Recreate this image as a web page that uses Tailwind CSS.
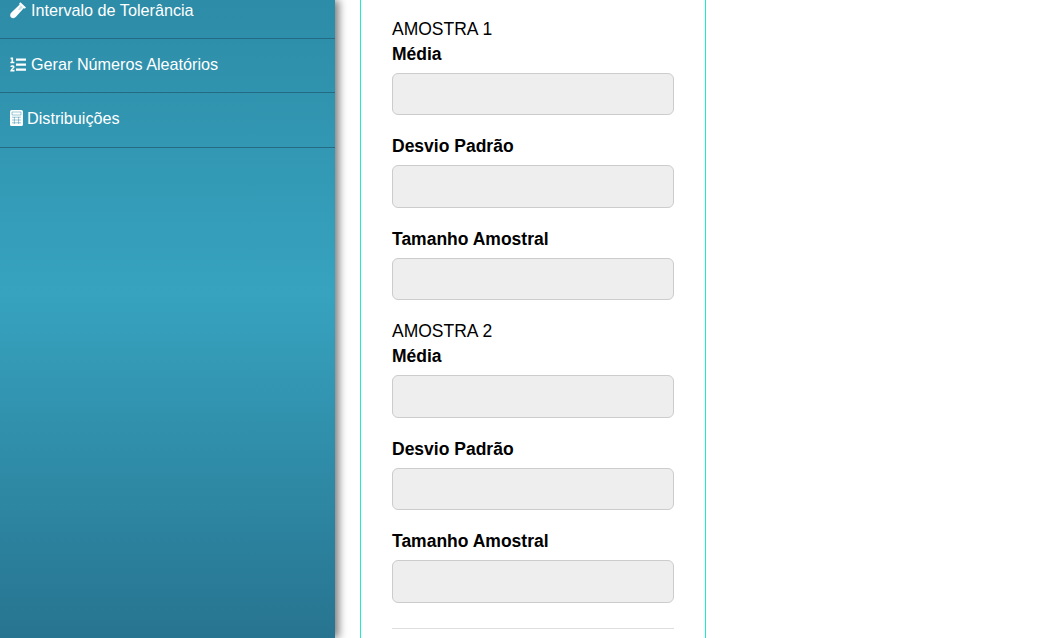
<!DOCTYPE html>
<html lang="pt">
<head>
<meta charset="utf-8">
<script src="https://cdn.jsdelivr.net/npm/@tailwindcss/browser@4"></script>
</head>
<body class="h-[638px] w-[1044px] overflow-hidden bg-white font-['Liberation_Sans',Arial,sans-serif] text-black">
<div class="flex h-[638px]">
  <aside class="h-[638px] w-[335px] shrink-0 bg-[linear-gradient(to_bottom,#2d8ca7_0%,#37a3bf_46%,#277490_100%)] text-white shadow-[4px_0_8px_rgba(0,0,0,0.5)]">
    <ul class="-mt-[17px] text-[16.2px] leading-[23px]">
      <li class="flex h-[56px] items-center gap-[5px] border-b border-[#256a85] pl-[10px]">
        <svg class="h-[17px] w-[16px] shrink-0" viewBox="0 0 16 17" fill="#fff"><path d="M10.4 0.2 16 5.4 14.7 6.8 13.9 6.1 6 14.8C4.6 16.4 2.6 16.7 1.1 15.4-0.3 14-0.1 12 1.4 10.5L9.7 2.4 9.1 1.7Z"/><path d="M10.7 3.2 12.8 5.2 10.2 8H7.9Z" fill="#2d8ca7" opacity="0.25"/></svg>
        <span>Intervalo de Tolerância</span>
      </li>
      <li class="flex h-[54px] items-center gap-[5px] border-b border-[#256a85] pb-[2px] pl-[10px]">
        <svg class="h-[16px] w-[16px] shrink-0" viewBox="0 0 16 16" fill="#fff"><path d="M0.6 0.6H3.1V4.7H4.4V6.3H0.4V4.7H1.5V2.2H0.6ZM0.3 9.2C1 7.9 4.5 7.5 4.5 9.9 4.5 11.4 2.7 11.8 2.3 12.7H4.5V14.4H0.2C0.2 11.9 2.7 11.2 2.7 10.2 2.7 9.4 1.4 9.6 1 10.2ZM6 1.6H16V3.8H6ZM6 6.6H16V8.8H6ZM6 11.6H16V13.8H6Z"/></svg>
        <span>Gerar Números Aleatórios</span>
      </li>
      <li class="flex h-[55px] items-center gap-[4px] border-b border-[#256a85] pb-[4px] pl-[10px]">
        <svg class="h-[16px] w-[13px] shrink-0" viewBox="0 0 13 16"><rect width="13" height="16" rx="1.6" fill="#fff"/><path d="M2 2H11V5H2ZM2 7.2H11M2 10H11M2 12.8H11M4.4 7V14M8.6 7V14" fill="none" stroke="#2d8ca7" stroke-width="0.8" opacity="0.6"/></svg>
        <span>Distribuições</span>
      </li>
    </ul>
  </aside>
  <main class="ml-[25px] h-[638px] w-[346px] shrink-0 border-x border-[#1aecd0] pl-[31px] pr-[31px] text-[17.5px] leading-[25px]">
    <form class="pt-[16.75px]">
      <p>AMOSTRA 1</p>
      <div class="mb-[19px]">
        <label class="mb-[6px] block font-bold">Média</label>
        <input class="block h-[42.5px] w-[282px] rounded-[6px] border border-[#cccccc] bg-[#eeeeee]" disabled>
      </div>
      <div class="mb-[19px]">
        <label class="mb-[6px] block font-bold">Desvio Padrão</label>
        <input class="block h-[42.5px] w-[282px] rounded-[6px] border border-[#cccccc] bg-[#eeeeee]" disabled>
      </div>
      <div class="mb-[19px]">
        <label class="mb-[6px] block font-bold">Tamanho Amostral</label>
        <input class="block h-[42.5px] w-[282px] rounded-[6px] border border-[#cccccc] bg-[#eeeeee]" disabled>
      </div>
      <p>AMOSTRA 2</p>
      <div class="mb-[19px]">
        <label class="mb-[6px] block font-bold">Média</label>
        <input class="block h-[42.5px] w-[282px] rounded-[6px] border border-[#cccccc] bg-[#eeeeee]" disabled>
      </div>
      <div class="mb-[19px]">
        <label class="mb-[6px] block font-bold">Desvio Padrão</label>
        <input class="block h-[42.5px] w-[282px] rounded-[6px] border border-[#cccccc] bg-[#eeeeee]" disabled>
      </div>
      <div class="mb-[19px]">
        <label class="mb-[6px] block font-bold">Tamanho Amostral</label>
        <input class="block h-[42.5px] w-[282px] rounded-[6px] border border-[#cccccc] bg-[#eeeeee]" disabled>
      </div>
      <hr class="mt-[25px] w-[282px] border-t border-[#dddddd]">
    </form>
  </main>
</div>
</body>
</html>
